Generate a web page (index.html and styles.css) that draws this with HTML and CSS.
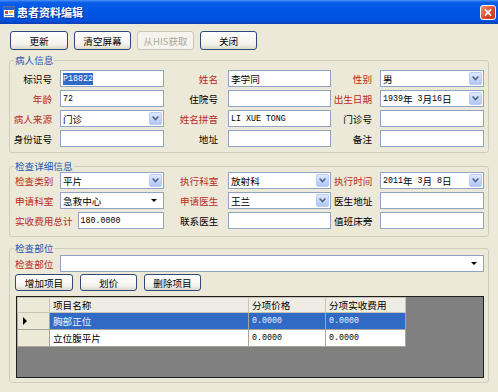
FILE: index.html
```html
<!DOCTYPE html>
<html lang="zh-CN">
<head>
    <meta charset="UTF-8">
    <title>患者资料编辑</title>
    <link rel="stylesheet" href="styles.css">
</head>
<body>
    <div class="window">
        <div class="titlebar">
            <svg class="app-icon" viewBox="0 0 12 12">
                <rect x="0.5" y="0.5" width="11" height="11" fill="#fff" stroke="#5a6e9c"/>
                <rect x="1" y="1" width="10" height="3" fill="#2c5fc9"/>
                <rect x="2" y="5" width="3" height="3" fill="#e2462a"/>
                <rect x="6" y="5" width="4" height="2" fill="#f2b02a"/>
                <rect x="2" y="9" width="8" height="1" fill="#4d7fd6"/>
            </svg>
            <span class="title">患者资料编辑</span>
            <span class="close-btn">
                <svg viewBox="0 0 16 15"><path d="M4.5 4 L11.5 11 M11.5 4 L4.5 11" stroke="#fff" stroke-width="2"/></svg>
            </span>
        </div>

        <div class="toolbar">
            <button class="btn">更新</button>
            <button class="btn">清空屏幕</button>
            <button class="btn" disabled>从HIS获取</button>
            <button class="btn">关闭</button>
        </div>

        <!-- 病人信息 -->
        <fieldset class="group patient">
            <legend>病人信息</legend>
            <div class="form-grid info">
                <label class="c1">标识号</label>
                <div class="field"><span class="latin picked">P18822</span></div>
                <label class="c2 req">姓名</label>
                <div class="field">李学同</div>
                <label class="c3 req">性别</label>
                <div class="field">男<span class="drop"><svg viewBox="0 0 7 5"><path d="M0.6 0.6 L3.5 3.6 L6.4 0.6" fill="none" stroke="#4d6185" stroke-width="1.5"/></svg></span></div>

                <label class="c1 req">年龄</label>
                <div class="field"><span class="latin">72</span></div>
                <label class="c2">住院号</label>
                <div class="field"></div>
                <label class="c3 req">出生日期</label>
                <div class="field"><span class="latin">1939</span>年<span class="latin">&nbsp;3</span>月<span class="latin">16</span>日<span class="drop"><svg viewBox="0 0 7 5"><path d="M0.6 0.6 L3.5 3.6 L6.4 0.6" fill="none" stroke="#4d6185" stroke-width="1.5"/></svg></span></div>

                <label class="c1 req">病人来源</label>
                <div class="field">门诊<span class="drop"><svg viewBox="0 0 7 5"><path d="M0.6 0.6 L3.5 3.6 L6.4 0.6" fill="none" stroke="#4d6185" stroke-width="1.5"/></svg></span></div>
                <label class="c2 req">姓名拼音</label>
                <div class="field"><span class="latin">LI XUE TONG</span></div>
                <label class="c3">门诊号</label>
                <div class="field"></div>

                <label class="c1">身份证号</label>
                <div class="field"></div>
                <label class="c2">地址</label>
                <div class="field"></div>
                <label class="c3">备注</label>
                <div class="field"></div>
            </div>
        </fieldset>

        <!-- 检查详细信息 -->
        <fieldset class="group exam">
            <legend>检查详细信息</legend>
            <div class="form-grid detail">
                <label class="c1 req">检查类别</label>
                <div class="field">平片<span class="drop"><svg viewBox="0 0 7 5"><path d="M0.6 0.6 L3.5 3.6 L6.4 0.6" fill="none" stroke="#4d6185" stroke-width="1.5"/></svg></span></div>
                <label class="c2 req">执行科室</label>
                <div class="field">放射科<span class="drop"><svg viewBox="0 0 7 5"><path d="M0.6 0.6 L3.5 3.6 L6.4 0.6" fill="none" stroke="#4d6185" stroke-width="1.5"/></svg></span></div>
                <label class="c3 req">执行时间</label>
                <div class="field"><span class="latin">2011</span>年<span class="latin">&nbsp;3</span>月<span class="latin">&nbsp;8</span>日<span class="drop"><svg viewBox="0 0 7 5"><path d="M0.6 0.6 L3.5 3.6 L6.4 0.6" fill="none" stroke="#4d6185" stroke-width="1.5"/></svg></span></div>

                <label class="c1 req">申请科室</label>
                <div class="field">急救中心<span class="arrow"></span></div>
                <label class="c2 req">申请医生</label>
                <div class="field">王兰<span class="drop"><svg viewBox="0 0 7 5"><path d="M0.6 0.6 L3.5 3.6 L6.4 0.6" fill="none" stroke="#4d6185" stroke-width="1.5"/></svg></span></div>
                <label class="c3">医生地址</label>
                <div class="field"></div>

                <div class="total">
                    <label class="c1 req">实收费用总计</label>
                    <div class="field"><span class="latin">180.0000</span></div>
                </div>
                <label class="c2">联系医生</label>
                <div class="field"></div>
                <label class="c3">值班床旁</label>
                <div class="field"></div>
            </div>
        </fieldset>

        <!-- 检查部位 -->
        <fieldset class="group parts">
            <legend>检查部位</legend>
            <div class="form-grid part">
                <label class="c1 req">检查部位</label>
                <div class="field wide"><span class="arrow"></span></div>
            </div>
            <div class="item-actions">
                <button class="btn small">增加项目</button>
                <button class="btn small">划价</button>
                <button class="btn small">删除项目</button>
            </div>
            <div class="grid-view">
                <table>
                    <thead>
                        <tr>
                            <th class="rh"></th>
                            <th class="col-name">项目名称</th>
                            <th class="col-price">分项价格</th>
                            <th class="col-paid">分项实收费用</th>
                        </tr>
                    </thead>
                    <tbody>
                        <tr class="selected">
                            <td class="rh"><span class="pointer"></span></td>
                            <td>胸部正位</td>
                            <td class="latin">0.0000</td>
                            <td class="latin">0.0000</td>
                        </tr>
                        <tr>
                            <td class="rh"></td>
                            <td>立位腹平片</td>
                            <td class="latin">0.0000</td>
                            <td class="latin">0.0000</td>
                        </tr>
                    </tbody>
                </table>
            </div>
        </fieldset>
    </div>
</body>
</html>
```

FILE: styles.css
```css
body {
    margin: 0;
    background: #ECE9D8;
    font-family: "Noto Sans CJK SC", "Noto Sans", sans-serif;
    font-size: 9.6px;
    color: #000;
}

.window {
    width: 498px;
    height: 392px;
    background: #ECE9D8;
    overflow: hidden;
}

/* 标题栏 */
.titlebar {
    height: 24px;
    box-sizing: border-box;
    display: flex;
    align-items: center;
    padding: 0 2px 0 3px;
    background: linear-gradient(#4b92f5 0%, #0a5ee8 10%, #0055e5 45%, #0052de 85%, #0a3fb4 100%);
}

.app-icon {
    width: 12px;
    height: 12px;
    display: block;
}

.title {
    margin-left: 2px;
    color: #fff;
    font-size: 11px;
    font-weight: bold;
    line-height: 14px;
    text-shadow: 1px 1px 0 #0b2a8a;
}

.close-btn {
    margin-left: auto;
    width: 16px;
    height: 15px;
    box-sizing: border-box;
    border: 1px solid #fff;
    border-radius: 3px;
    background: linear-gradient(135deg, #f0906e, #d8462a 60%, #c23a1f);
}

.close-btn svg {
    display: block;
    width: 14px;
    height: 13px;
}

/* 按钮 */
.toolbar {
    display: flex;
    gap: 6px;
    padding: 7px 0 0 10px;
}

.btn {
    width: 57px;
    height: 19px;
    padding: 0;
    border: 1px solid #2c4a78;
    border-radius: 3px;
    background: linear-gradient(#ffffff, #f4f3ee 70%, #dcd8cc);
    font-family: inherit;
    font-size: 9.6px;
    line-height: 12px;
    color: #000;
}

.btn:first-child {
    width: 58px;
}

.btn:disabled {
    border-color: #c9c7ba;
    background: #f4f3ec;
    color: #aca899;
}

.btn.small {
    height: 17px;
}

/* 分组框 */
.group {
    margin: 5px 9px 0;
    padding: 0 0 3px;
    border: 1px solid #d0ccbc;
    border-radius: 3px;
    min-width: 0;
}

.group.patient {
    padding-bottom: 5px;
}

.group.exam {
    margin-top: 8px;
    padding-bottom: 7px;
}

.group.parts {
    margin-top: 6px;
}

.group legend {
    margin-left: 4px;
    padding: 0 1px;
    color: #2556b0;
    font-size: 9.6px;
    line-height: 11px;
}

.form-grid {
    display: grid;
    grid-template-columns: 47px 104px 58px 103px 43px 104px;
    grid-auto-rows: 17px;
    column-gap: 3px;
    row-gap: 3px;
    padding-top: 4px;
}

.form-grid.detail {
    padding-top: 0;
}

.form-grid.part {
    padding-top: 1px;
}

.form-grid label {
    display: flex;
    align-items: center;
    white-space: nowrap;
    line-height: 12px;
}

.info label {
    justify-content: flex-end;
}

.info .c1 { padding-right: 5px; }
.info .c2 { padding-right: 7px; }
.info .c3 { padding-right: 5px; }

.detail .c1,
.part .c1 { padding-left: 5px; }
.detail .c2 { padding-left: 13px; }

.req {
    color: #bb2b24;
}

.field {
    box-sizing: border-box;
    display: flex;
    align-items: center;
    padding-left: 2px;
    border: 1px solid #8ea4c0;
    background: #fff;
    line-height: 12px;
    white-space: nowrap;
    overflow: hidden;
}

.field.wide {
    grid-column: span 5;
}

.latin {
    font-family: "Liberation Mono", monospace;
    font-size: 8.3px;
}

.picked {
    background: #316ac5;
    color: #fff;
}

.drop {
    margin-left: auto;
    margin-right: 1px;
    width: 13px;
    height: 13px;
    box-sizing: border-box;
    border: 1px solid #b9cdf5;
    border-radius: 2px;
    background: linear-gradient(#dfe9fd, #c1d4fa 60%, #afc6f4);
    display: flex;
    align-items: center;
    justify-content: center;
}

.drop svg {
    width: 7px;
    height: 5px;
    display: block;
}

.arrow {
    margin-left: auto;
    margin-right: 6px;
    width: 0;
    height: 0;
    border-left: 3px solid transparent;
    border-right: 3px solid transparent;
    border-top: 3px solid #000;
}

.total {
    grid-column: span 2;
    display: flex;
    gap: 5px;
}

.total .field {
    flex: 1;
}

.item-actions {
    display: flex;
    gap: 7px;
    padding: 2px 0 0 5px;
}

/* 明细表格 */
.grid-view {
    margin: 5px 0 1px 6px;
    width: 468px;
    height: 82px;
    box-sizing: border-box;
    border: 1px solid #1e1e1e;
    background: #808080;
}

.grid-view table {
    border-collapse: collapse;
    table-layout: fixed;
    width: 384px;
}

.grid-view th,
.grid-view td {
    height: 16px;
    padding: 0 0 0 3px;
    border: 1px solid #a7a69c;
    text-align: left;
    font-weight: normal;
    white-space: nowrap;
    line-height: 12px;
}

.grid-view th {
    height: 14px;
    background: #efede3;
    border-color: #c8c4b4;
}

.grid-view .rh {
    width: 28px;
    background: #ECE9D8;
}

.col-name { width: 195px; }
.col-price { width: 73px; }
.col-paid { width: 76px; }

.grid-view td {
    background: #fff;
}

.grid-view tr.selected td {
    background: #316ac5;
    color: #e8f0ff;
}

.grid-view tr.selected td.rh {
    background: #ECE9D8;
}

.pointer {
    display: block;
    width: 0;
    height: 0;
    margin-left: 2px;
    border-left: 4px solid #000;
    border-top: 4px solid transparent;
    border-bottom: 4px solid transparent;
}
```
